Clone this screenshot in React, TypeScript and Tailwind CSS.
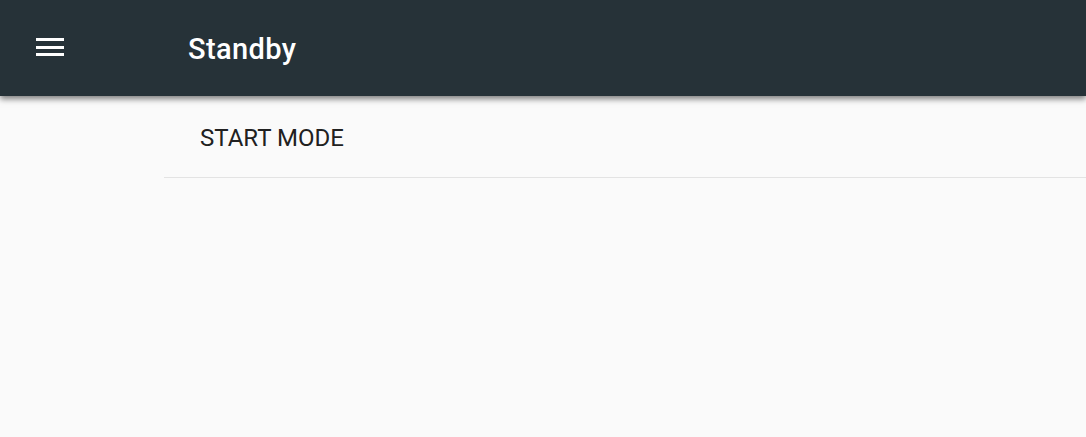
import React from "react";

export default function App() {
  return (
    <div
      className="w-[1086px] h-[437px] bg-[#fafafa] overflow-hidden flex flex-col"
      style={{ fontFamily: "Roboto, 'Noto Sans', sans-serif" }}
    >
      <header className="relative z-10 h-[96px] shrink-0 bg-[#263238] flex items-center shadow-[0_3px_6px_rgba(0,0,0,0.5)]">
        <button className="w-[100px] h-full flex items-center justify-center pb-[2px]">
          <span className="flex flex-col gap-[4.5px] w-[28px]">
            <span className="block h-[3px] w-full bg-white" />
            <span className="block h-[3px] w-full bg-white" />
            <span className="block h-[3px] w-full bg-white" />
          </span>
        </button>
        <h1 className="ml-[88px] text-[29px] font-medium text-white tracking-[0.4px] leading-none pt-[2px]">
          Standby
        </h1>
      </header>
      <div className="flex-1 pl-[164px]">
        <div className="h-[82px] border-b border-[#e3e3e3] flex items-center pl-[36px] pt-[2px]">
          <span className="text-[24px] text-[#212121] leading-none">START MODE</span>
        </div>
      </div>
    </div>
  );
}
